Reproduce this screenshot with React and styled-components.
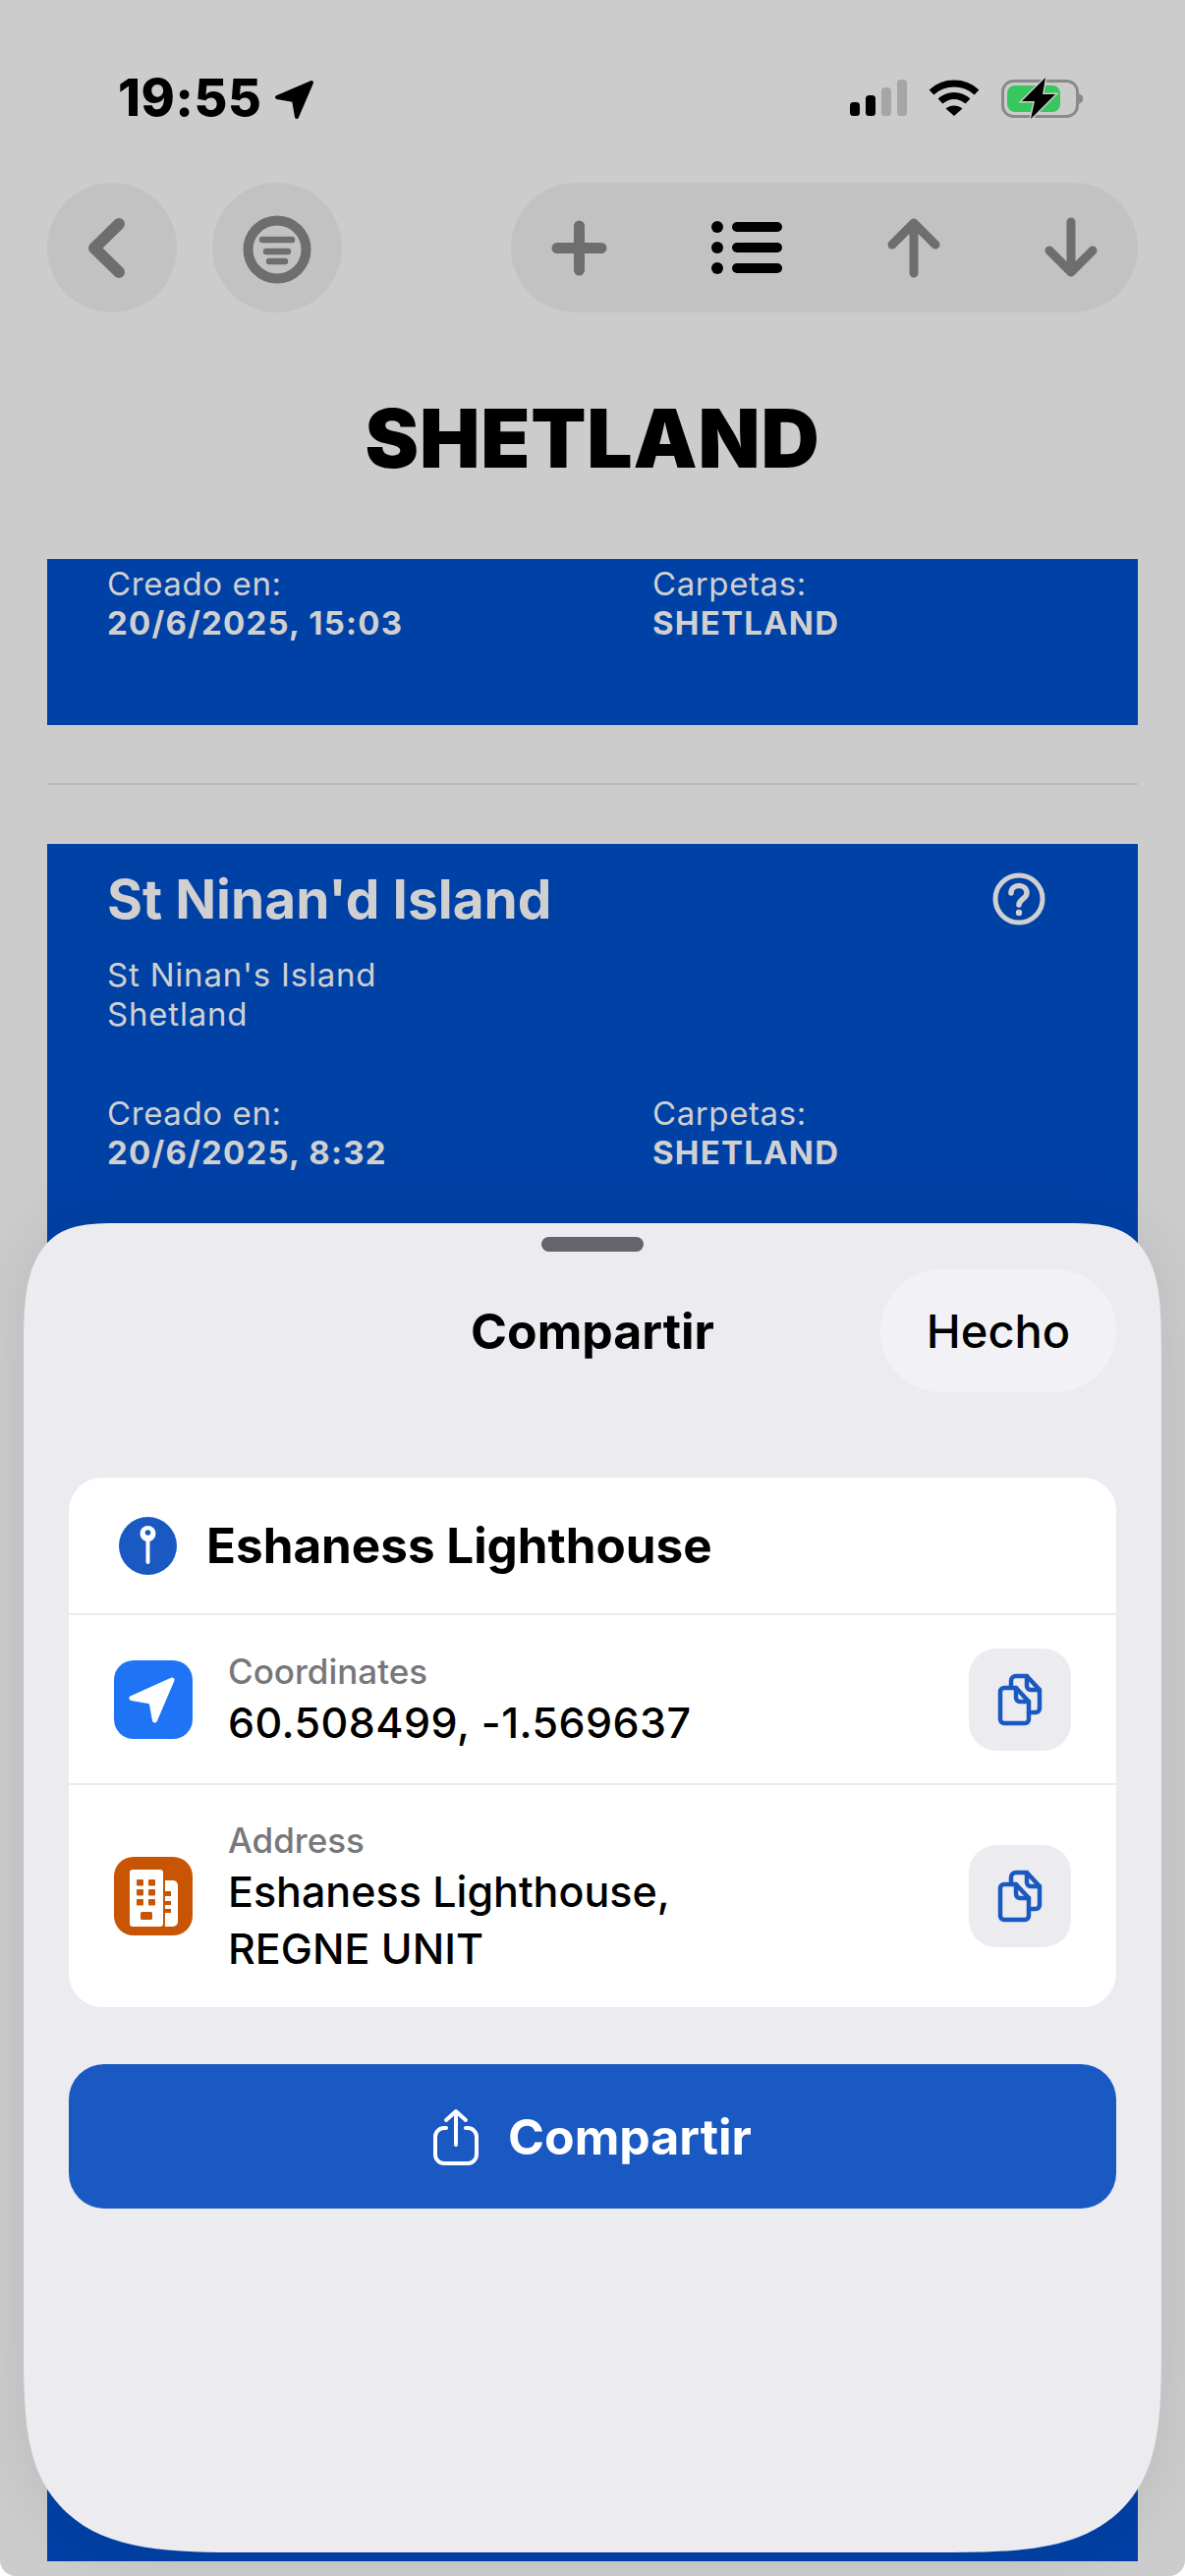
import styled, { createGlobalStyle } from "styled-components";

const GlobalStyle = createGlobalStyle`
    html, body {
        margin: 0;
        padding: 0;
        background: #fff;
    }
    * {
        box-sizing: border-box;
    }
`;

const Screen = styled.div`
    position: relative;
    width: 1206px;
    height: 2622px;
    overflow: hidden;
    border-radius: 0 0 16px 16px;
    background: #cccccc;
    font-family: Inter, "Liberation Sans", sans-serif;
`;

const StatusBar = styled.div`
    display: flex;
    align-items: center;
    justify-content: space-between;
    height: 44px;
    margin-top: 78px;
    padding: 0 104px 0 120px;
`;

const StatusLeft = styled.div`
    display: flex;
    align-items: center;
    gap: 12px;
`;

const Time = styled.span`
    font-size: 52px;
    line-height: 44px;
    font-weight: 800;
    letter-spacing: 0.6px;
    color: #000;
`;

const StatusRight = styled.div`
    display: flex;
    align-items: center;
    gap: 22px;
`;

const Toolbar = styled.div`
    display: flex;
    align-items: center;
    gap: 36px;
    margin-top: 64px;
    padding: 0 48px;
`;

const RoundButton = styled.div`
    display: flex;
    align-items: center;
    justify-content: center;
    width: 132px;
    height: 132px;
    border-radius: 50%;
    background: #c2c2c2;
`;

const Pill = styled.div`
    display: flex;
    align-items: center;
    justify-content: space-between;
    width: 638px;
    height: 132px;
    margin-left: auto;
    padding: 0 41px;
    border-radius: 66px;
    background: #c2c2c2;
`;

const Title = styled.h1`
    margin: 84px 0 0;
    height: 90px;
    font-size: 82px;
    line-height: 90px;
    font-weight: 900;
    text-align: center;
    letter-spacing: 0.8px;
    color: #000;
`;

const List = styled.div`
    margin: 77px 48px 0;
    height: 2038px;
    overflow: hidden;
`;

const Card = styled.div`
    height: ${(props) => props.$height}px;
    padding: ${(props) => props.$top}px 61px 0;
    background: #0041a6;
    color: #d0d0d0;
`;

const CardHead = styled.div`
    display: flex;
    align-items: center;
    justify-content: space-between;
    padding-right: 33px;
`;

const CardName = styled.div`
    font-size: 55px;
    line-height: 64px;
    font-weight: 700;
`;

const CardPlace = styled.div`
    margin-top: 25px;
    font-size: 33px;
    line-height: 40px;
    letter-spacing: 0.8px;
`;

const MetaRow = styled.div`
    display: grid;
    grid-template-columns: 555px 1fr;
    margin-top: ${(props) => props.$top || 0}px;
`;

const MetaLabel = styled.div`
    font-size: 33px;
    line-height: 40px;
    letter-spacing: 0.6px;
`;

const MetaValue = styled.div`
    font-size: 33px;
    line-height: 40px;
    font-weight: 700;
    letter-spacing: 1.2px;
`;

const Divider = styled.div`
    height: 2px;
    margin: 59px 0 60px;
    background: #bcbcbc;
`;

const Sheet = styled.div`
    position: absolute;
    top: 1245px;
    left: 24px;
    display: flex;
    flex-direction: column;
    width: 1158px;
    height: 1353px;
    padding: 0 46px;
    border-radius: 100px 100px 230px 230px / 135px 135px 210px 210px;
    corner-shape: superellipse(1.7);
    background: #ebebf0;
    box-shadow: 0 0 70px rgba(0, 0, 0, 0.09);
`;

const Handle = styled.div`
    align-self: center;
    flex: none;
    width: 104px;
    height: 15px;
    margin-top: 14px;
    border-radius: 8px;
    background: #64646c;
`;

const SheetHeader = styled.div`
    display: grid;
    grid-template-columns: 1fr auto 1fr;
    align-items: center;
    margin-top: 18px;
`;

const SheetTitle = styled.div`
    font-size: 50px;
    font-weight: 700;
    color: #000;
`;

const DoneButton = styled.div`
    display: flex;
    align-items: center;
    justify-content: center;
    justify-self: end;
    width: 240px;
    height: 125px;
    border-radius: 62px;
    background: #f2f2f6;
    font-size: 47px;
    font-weight: 500;
    color: #000;
`;

const InfoCard = styled.div`
    margin-top: 87px;
    border-radius: 34px;
    background: #fff;
    overflow: hidden;
`;

const InfoHeader = styled.div`
    display: flex;
    align-items: center;
    gap: 30px;
    height: 140px;
    padding: 0 0 0 51px;
    border-bottom: 2px solid #ebebf0;
`;

const PlaceName = styled.div`
    font-size: 49.4px;
    font-weight: 700;
    color: #000;
`;

const InfoRow = styled.div`
    display: flex;
    align-items: center;
    height: ${(props) => props.$height}px;
    padding: 0 46px;
    border-bottom: ${(props) => (props.$last ? "none" : "2px solid #ebebf0")};
`;

const IconTile = styled.div`
    display: flex;
    flex: none;
    width: 80px;
    height: 80px;
    border-radius: 20px;
    background: ${(props) => props.$color};
`;

const InfoText = styled.div`
    flex: 1;
    margin-left: 36px;
    padding-top: 2px;
`;

const InfoLabel = styled.div`
    font-size: 35px;
    line-height: 44px;
    font-weight: 500;
    color: #77777b;
`;

const InfoValue = styled.div`
    margin-top: 1px;
    font-size: 43px;
    line-height: 58px;
    font-weight: 500;
    letter-spacing: ${(props) => props.$spacing || 0}px;
    color: #000;
`;

const CopyButton = styled.div`
    display: flex;
    align-items: center;
    justify-content: center;
    flex: none;
    width: 104px;
    height: 104px;
    border-radius: 28px;
    background: #ebebf0;
`;

const ShareButton = styled.div`
    display: flex;
    align-items: center;
    justify-content: center;
    gap: 30px;
    height: 147px;
    margin-top: 58px;
    border-radius: 36px;
    background: #1a58c2;
    font-size: 50px;
    font-weight: 700;
    color: #fff;
`;

const Arrow = ({ size, color }) => (
    <svg width={size} height={size} viewBox="0 0 44 44" fill={color}>
        <path d="M39 6 L4 21 L21 24 L24 41 Z" stroke={color} strokeWidth="4" strokeLinejoin="round" />
    </svg>
);

const Signal = () => (
    <svg width="58" height="38" viewBox="0 0 58 38">
        <rect x="0" y="23" width="10" height="14" rx="3.5" fill="#000" />
        <rect x="16" y="16" width="10" height="21" rx="3.5" fill="#000" />
        <rect x="32" y="8" width="10" height="29" rx="3.5" fill="#a6a6a6" />
        <rect x="48" y="0" width="10" height="37" rx="3.5" fill="#a6a6a6" />
    </svg>
);

const Wifi = () => (
    <svg width="52" height="38" viewBox="0 0 52 38" fill="none" stroke="#000" strokeWidth="7">
        <path d="M3 13 C16 1 36 1 49 13" />
        <path d="M12 22 C20 14.5 32 14.5 40 22" />
        <path d="M26 37 L17.5 29.5 C22.5 25.5 29.5 25.5 34.5 29.5 Z" fill="#000" stroke="none" />
    </svg>
);

const Battery = () => (
    <svg width="83" height="42" viewBox="0 0 83 42">
        <rect x="1.5" y="3.5" width="76" height="36" rx="11" fill="none" stroke="#8a8a8a" strokeWidth="3" />
        <rect x="6" y="8" width="54" height="27" rx="8" fill="#37c75d" />
        <path d="M79 16 L83 19 V24 L79 27 Z" fill="#8a8a8a" />
        <path d="M45 0 L21 24 H34 L30 42 L55 17 H42 Z" fill="#000" stroke="#ccc" strokeWidth="3" paintOrder="stroke" />
    </svg>
);

const Chevron = () => (
    <svg width="37" height="61" viewBox="0 0 37 61" fill="none" stroke="#6e6e6e" strokeWidth="12" strokeLinecap="round" strokeLinejoin="round" style={{ marginRight: 11 }}>
        <path d="M31 6 L6 30.5 L31 55" />
    </svg>
);

const FilterCircle = () => (
    <svg width="70" height="70" viewBox="0 0 70 70" style={{ marginTop: 4 }}>
        <circle cx="35" cy="35" r="29.5" fill="none" stroke="#6e6e6e" strokeWidth="10" />
        <g stroke="#6e6e6e" strokeWidth="6.5" strokeLinecap="round">
            <path d="M20 25 H50" />
            <path d="M24 37 H46" />
            <path d="M27 47 H43" />
        </g>
    </svg>
);

const Plus = () => (
    <svg width="57" height="57" viewBox="0 0 57 57" stroke="#6e6e6e" strokeWidth="11" strokeLinecap="round">
        <path d="M28.5 6 V51 M6 28.5 H51" />
    </svg>
);

const ListIcon = () => (
    <svg width="72" height="54" viewBox="0 0 72 54">
        <g fill="#000">
            <circle cx="6" cy="6" r="6" />
            <circle cx="6" cy="27" r="6" />
            <circle cx="6" cy="48" r="6" />
            <rect x="21" y="1" width="51" height="10" rx="5" />
            <rect x="21" y="22" width="51" height="10" rx="5" />
            <rect x="21" y="43" width="51" height="10" rx="5" />
        </g>
    </svg>
);

const ArrowIcon = ({ down }) => (
    <svg width="54" height="62" viewBox="0 0 54 62" fill="none" stroke="#6e6e6e" strokeWidth="9" strokeLinecap="round" strokeLinejoin="round">
        {down ? <path d="M27 5 V56 M5 34 L27 56 L49 34" /> : <path d="M27 57 V6 M5 28 L27 6 L49 28" />}
    </svg>
);

const Help = () => (
    <svg width="54" height="54" viewBox="0 0 54 54" fill="none" stroke="#d0d0d0" strokeLinecap="round">
        <circle cx="27" cy="27" r="24" strokeWidth="5" />
        <path d="M19 21 C19 11 35 11 35 21 C35 27 27 27 27 33" strokeWidth="5.5" />
        <circle cx="27" cy="41" r="3.2" fill="#d0d0d0" stroke="none" />
    </svg>
);

const Pin = () => (
    <svg width="59" height="59" viewBox="0 0 59 59">
        <circle cx="29.5" cy="29.5" r="29.5" fill="#1a58c2" />
        <path d="M29.5 24 V46" stroke="#fff" strokeWidth="4" strokeLinecap="round" />
        <circle cx="29.5" cy="17" r="8" fill="#fff" />
        <circle cx="29.5" cy="16" r="2.8" fill="#1a58c2" />
    </svg>
);

const NavGlyph = () => (
    <svg width="80" height="80" viewBox="0 0 80 80" fill="#fff">
        <path d="M59 20 L18 38.5 L38 42 L41.5 61 Z" stroke="#fff" strokeWidth="5" strokeLinejoin="round" />
    </svg>
);

const BuildingGlyph = () => (
    <svg width="80" height="80" viewBox="0 0 80 80">
        <rect x="16" y="13" width="34" height="58" rx="3" fill="#fff" />
        <path d="M52 24 H60 A5 5 0 0 1 65 29 V66 A5 5 0 0 1 60 71 H52 Z" fill="#fff" />
        <g fill="#c85504">
            <rect x="23" y="23" width="7" height="6.5" rx="1" />
            <rect x="35" y="23" width="7" height="6.5" rx="1" />
            <rect x="23" y="33" width="7" height="6.5" rx="1" />
            <rect x="35" y="33" width="7" height="6.5" rx="1" />
            <rect x="23" y="43" width="7" height="6.5" rx="1" />
            <rect x="35" y="43" width="7" height="6.5" rx="1" />
            <rect x="27" y="56" width="12" height="8" rx="1.5" />
            <rect x="52" y="35" width="6" height="5" />
            <rect x="52" y="45" width="6" height="4" />
            <rect x="52" y="53" width="6" height="4" />
        </g>
    </svg>
);

const CopyGlyph = () => (
    <svg width="46" height="54" viewBox="0 0 46 54" fill="none" stroke="#1a58c2" strokeWidth="4.5" strokeLinejoin="round" strokeLinecap="round">
        <path d="M7 15 H19 L32 29 V47 A4 4 0 0 1 28 51 H7 A4 4 0 0 1 3 47 V19 A4 4 0 0 1 7 15 Z" />
        <path d="M19 15 V25 A4 4 0 0 0 23 29 H32" />
        <path d="M14 15 V8 A5 5 0 0 1 19 3 H30 L43 17 V36 A4 4 0 0 1 39 40 H32" />
        <path d="M30 3 V13 A4 4 0 0 0 34 17 H43" />
    </svg>
);

const ShareGlyph = () => (
    <svg width="46" height="58" viewBox="0 0 46 58" fill="none" stroke="#fff" strokeWidth="4" strokeLinecap="round" strokeLinejoin="round">
        <path d="M13 20 H11 A9 9 0 0 0 2 29 V47 A9 9 0 0 0 11 56 H35 A9 9 0 0 0 44 47 V29 A9 9 0 0 0 35 20 H33" />
        <path d="M23 37 V3 M13 12 L23 3 L33 12" />
    </svg>
);

const App = () => {
    return (
        <Screen>
            <GlobalStyle />
            <StatusBar>
                <StatusLeft>
                    <Time>19:55</Time>
                    <Arrow size={44} color="#000" />
                </StatusLeft>
                <StatusRight>
                    <Signal />
                    <Wifi />
                    <Battery />
                </StatusRight>
            </StatusBar>
            <Toolbar>
                <RoundButton>
                    <Chevron />
                </RoundButton>
                <RoundButton>
                    <FilterCircle />
                </RoundButton>
                <Pill>
                    <Plus />
                    <ListIcon />
                    <ArrowIcon />
                    <ArrowIcon down />
                </Pill>
            </Toolbar>
            <Title>SHETLAND</Title>
            <List>
                <Card $height={169} $top={5}>
                    <MetaRow>
                        <MetaLabel>Creado en:</MetaLabel>
                        <MetaLabel>Carpetas:</MetaLabel>
                        <MetaValue>20/6/2025, 15:03</MetaValue>
                        <MetaValue>SHETLAND</MetaValue>
                    </MetaRow>
                </Card>
                <Divider />
                <Card $height={1748} $top={24}>
                    <CardHead>
                        <CardName>St Ninan'd Island</CardName>
                        <Help />
                    </CardHead>
                    <CardPlace>
                        St Ninan's Island
                        <br />
                        Shetland
                    </CardPlace>
                    <MetaRow $top={61}>
                        <MetaLabel>Creado en:</MetaLabel>
                        <MetaLabel>Carpetas:</MetaLabel>
                        <MetaValue>20/6/2025, 8:32</MetaValue>
                        <MetaValue>SHETLAND</MetaValue>
                    </MetaRow>
                </Card>
            </List>
            <Sheet>
                <Handle />
                <SheetHeader>
                    <span />
                    <SheetTitle>Compartir</SheetTitle>
                    <DoneButton>Hecho</DoneButton>
                </SheetHeader>
                <InfoCard>
                    <InfoHeader>
                        <Pin />
                        <PlaceName>Eshaness Lighthouse</PlaceName>
                    </InfoHeader>
                    <InfoRow $height={173}>
                        <IconTile $color="#1f74f5">
                            <NavGlyph />
                        </IconTile>
                        <InfoText>
                            <InfoLabel>Coordinates</InfoLabel>
                            <InfoValue $spacing={0.45}>60.508499, -1.569637</InfoValue>
                        </InfoText>
                        <CopyButton>
                            <CopyGlyph />
                        </CopyButton>
                    </InfoRow>
                    <InfoRow $height={226} $last>
                        <IconTile $color="#c85504">
                            <BuildingGlyph />
                        </IconTile>
                        <InfoText>
                            <InfoLabel>Address</InfoLabel>
                            <InfoValue>
                                Eshaness Lighthouse,
                                <br />
                                REGNE UNIT
                            </InfoValue>
                        </InfoText>
                        <CopyButton>
                            <CopyGlyph />
                        </CopyButton>
                    </InfoRow>
                </InfoCard>
                <ShareButton>
                    <ShareGlyph />
                    Compartir
                </ShareButton>
            </Sheet>
        </Screen>
    );
};

export default App;
